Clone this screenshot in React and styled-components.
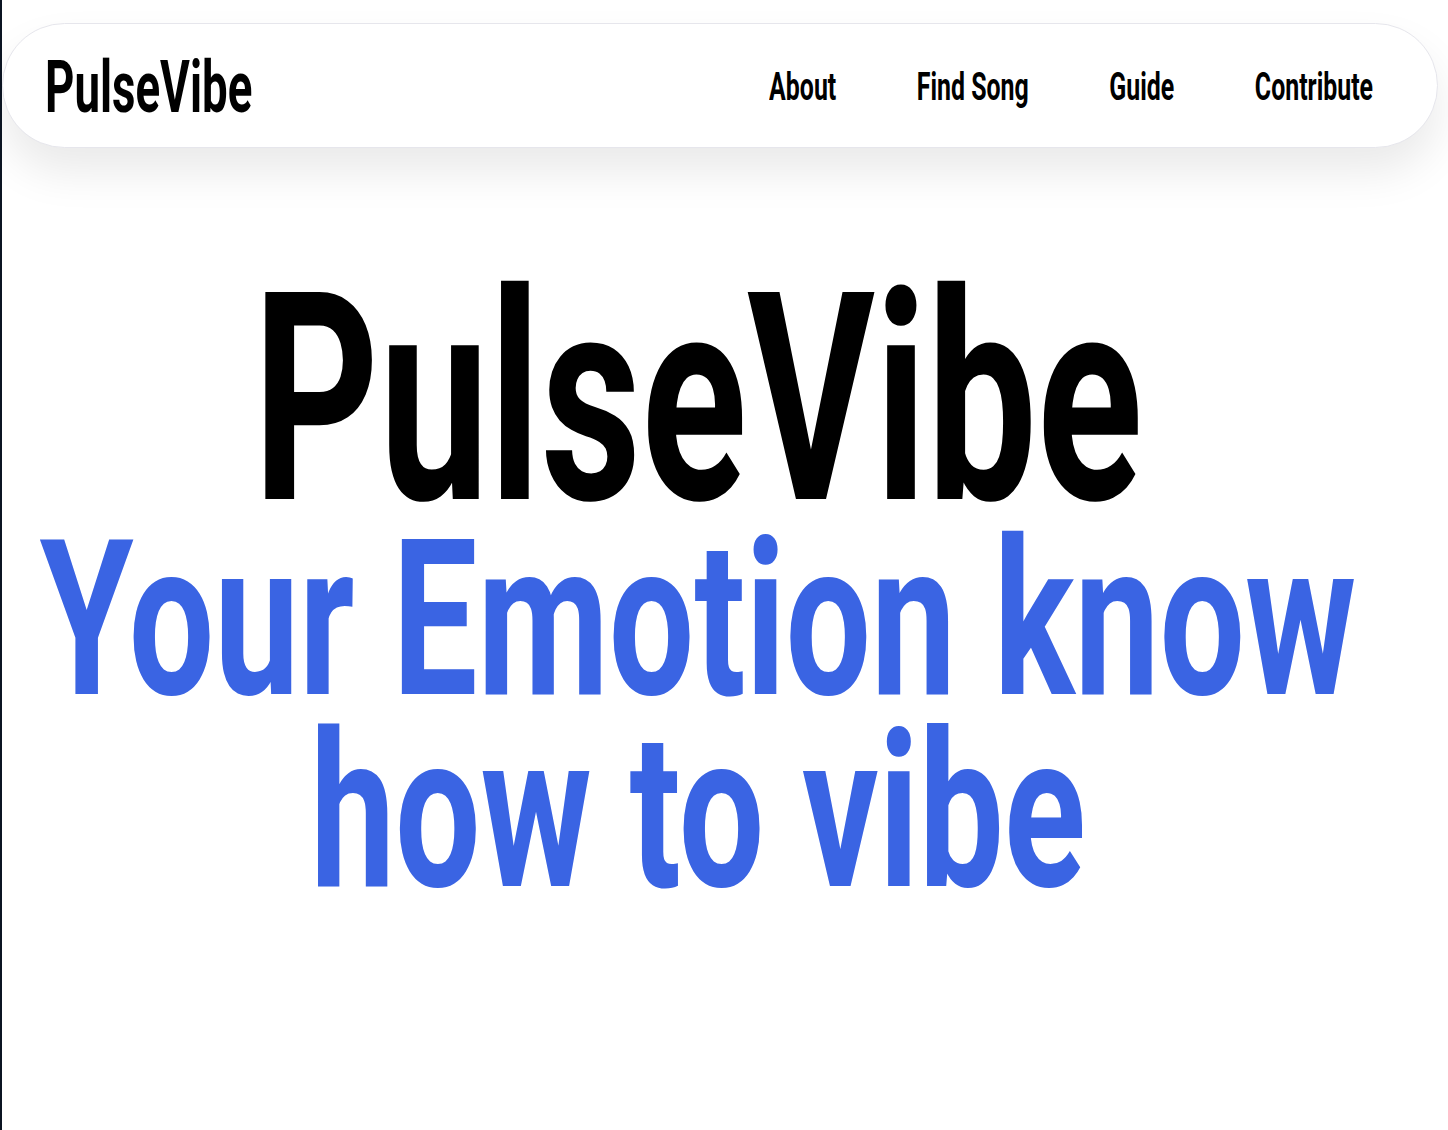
import React from 'react'
import styled, { createGlobalStyle } from 'styled-components'

// no condensed display face is installed, so squeeze Roboto Bold horizontally
const squeeze = s => `
    transform: scaleX(${s});
`

const HERO_WIDTH = 1392

const GlobalStyle = createGlobalStyle`
    html, body {
        margin: 0;
        padding: 0;
        background: #fff;
    }
    body {
        font-family: Roboto, "Liberation Sans", sans-serif;
        font-weight: 700;
        color: #000;
    }
`

const Page = styled.div`
    min-height: 1130px;
    border-left: 2px solid #0b1422;
    box-sizing: border-box;
    overflow: hidden;
`

const Navbar = styled.nav`
    display: flex;
    align-items: center;
    justify-content: space-between;
    height: 125px;
    box-sizing: border-box;
    margin: 23px 10px 0 0;
    padding: 3px 64px 0 42px;
    background: #fff;
    border: 1px solid #e6e6ec;
    border-radius: 64px;
    box-shadow: 0 24px 44px rgba(0, 0, 0, 0.085);
`

const Logo = styled.div`
    font-size: 73px;
    line-height: 1;
    ${squeeze(0.625)}
    transform-origin: left center;
`

const Links = styled.ul`
    display: flex;
    gap: 123px;
    list-style: none;
    margin: 0;
    padding: 0;
    ${squeeze(0.655)}
    transform-origin: right center;
`

const NavLink = styled.li`
    font-size: 38px;
    line-height: 1;
    cursor: pointer;
`

const Hero = styled.section`
    width: ${HERO_WIDTH}px;
    padding-top: 128px;
`

// each line block is widened by 1/scale, then squeezed back to the hero width
const Squeezed = styled.div`
    width: ${p => Math.round(HERO_WIDTH / p.$scale)}px;
    text-align: center;
    ${p => squeeze(p.$scale)}
    transform-origin: left top;
`

const Title = styled.h1`
    margin: 0;
    font-size: 291px;
    font-weight: 700;
    line-height: 248px;
`

const Tagline = styled.h2`
    margin: 0;
    font-size: 218px;
    font-weight: 700;
    line-height: 192px;
    color: #3a64e3;
`

const links = ['About', 'Find Song', 'Guide', 'Contribute']

const App = () => {
    return (
        <Page>
            <GlobalStyle />
            <Navbar>
                <Logo>PulseVibe</Logo>
                <Links>
                    {links.map(l => <NavLink key={l}>{l}</NavLink>)}
                </Links>
            </Navbar>
            <Hero>
                <Squeezed $scale={0.673}>
                    <Title>PulseVibe</Title>
                </Squeezed>
                <Squeezed $scale={0.695}>
                    <Tagline>Your Emotion know how to vibe</Tagline>
                </Squeezed>
            </Hero>
        </Page>
    )
}

export default App
